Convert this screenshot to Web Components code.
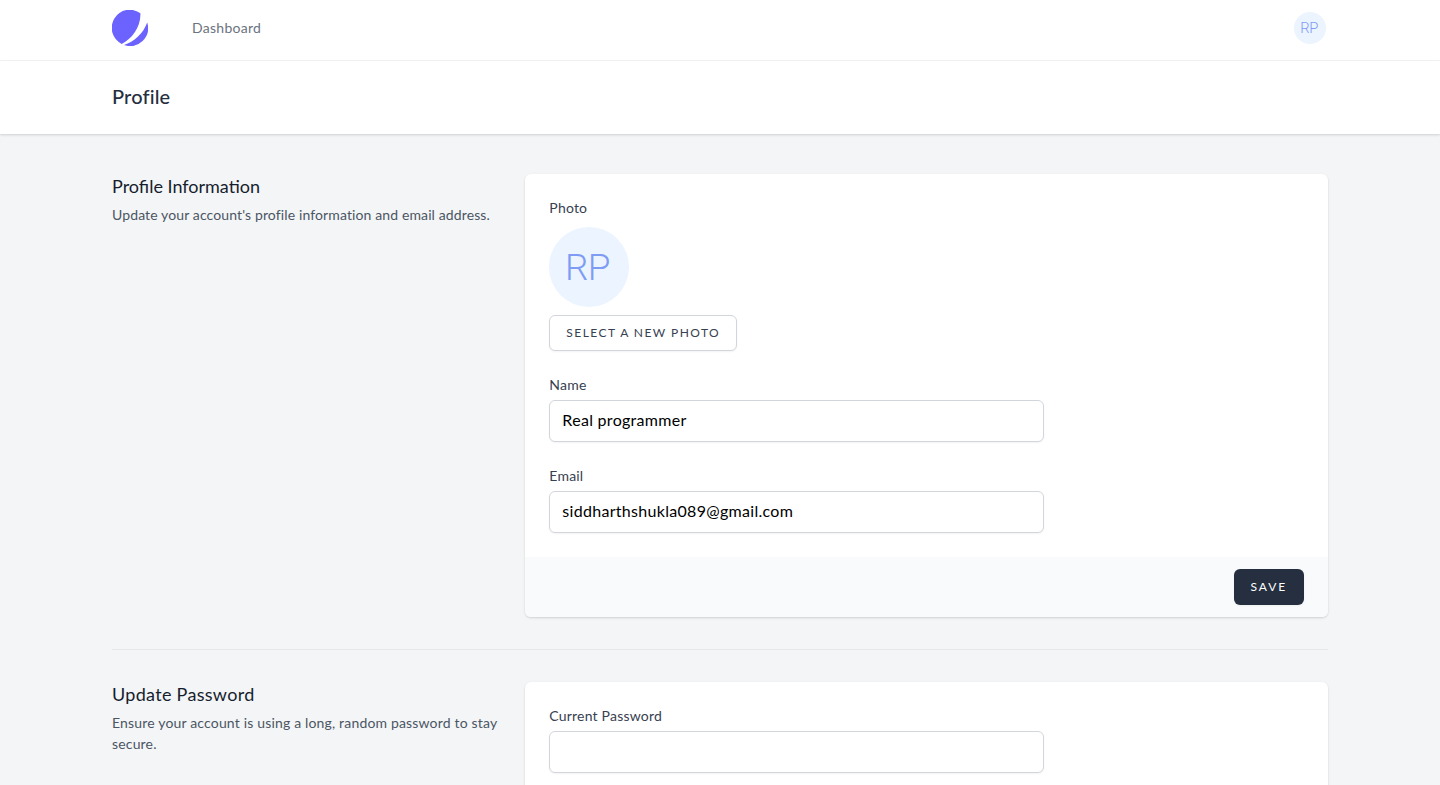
<!DOCTYPE html>
<html><head><meta charset="utf-8">
<style>
html,body{margin:0;padding:0;height:785px;overflow:hidden;background:#f4f5f7;font-family:Lato,"Open Sans",sans-serif;color:#1a202c}
</style></head><body>
<app-nav></app-nav>
<page-header>Profile</page-header>
<main-area>
 <form-section heading="Profile Information" desc="Update your account's profile information and email address." style="--hs:0px;--ds:.12px">
  <field-label>Photo</field-label>
  <user-avatar size="80" style="margin-top:9px"></user-avatar>
  <ui-button style="margin-top:8px;--bs:1.44px">SELECT A NEW PHOTO</ui-button>
  <text-field label="Name" value="Real programmer" style="margin-top:24px"></text-field>
  <text-field label="Email" value="siddharthshukla089@gmail.com" style="margin-top:24px"></text-field>
  <ui-button slot="actions" variant="dark">SAVE</ui-button>
 </form-section>
 <section-divider></section-divider>
 <form-section heading="Update Password" desc="Ensure your account is using a long, random password to stay secure." style="--hs:.3px;--ds:.17px">
  <text-field label="Current Password" value=""></text-field>
 </form-section>
</main-area>
<script>
function def(name,css,html){
 customElements.define(name,class extends HTMLElement{
  connectedCallback(){
   if(this.shadowRoot)return;
   const r=this.attachShadow({mode:'open'});
   const h=typeof html==='function'?html(this):html;
   r.innerHTML='<style>'+css+'</style>'+h;
  }
 });
}
def('user-avatar',`:host{display:block;width:32px;height:32px;border-radius:50%;background:#ebf4ff;color:#7f9cf5}
 div{width:100%;height:100%;display:flex;align-items:center;justify-content:center;font-family:Roboto,sans-serif;font-weight:300;line-height:1;box-sizing:border-box}`,
 el=>{const s=+(el.getAttribute('size')||32);el.style.width=el.style.height=s+'px';return `<div style="font-size:${s*0.46}px;letter-spacing:${s*-0.01}px;padding-right:${s*0.05}px;padding-top:${s*0.04}px">RP</div>`});
def('app-nav',`:host{display:block;background:#fff;border-bottom:1px solid #f4f5f7;height:60px}
 .in{max-width:1216px;margin:0 auto;height:60px;display:flex;align-items:center}
 svg{display:block;width:36px;height:36px;margin-top:-4px;flex:none}
 a{margin-left:44px;font-size:14px;color:#6b7280;letter-spacing:.27px;margin-top:-6px}
 user-avatar{margin-left:auto;margin-right:2px;margin-top:-4px}`,
 `<div class="in"><svg viewBox="0 0 36 36"><path fill="#6c63ff" d="M28.4 3.300A18 18 0 1 0 9.700 33.900C20 29 29 17 28.400 3.300z"/><path fill="#6c63ff" d="M35.200 12.600A18 18 0 0 1 12 35C22 32 31 24 35.200 12.600z"/></svg><a>Dashboard</a><user-avatar></user-avatar></div>`);
def('page-header',`:host{display:block;background:#fff;box-shadow:0 1px 3px 0 rgba(0,0,0,.1),0 1px 2px 0 rgba(0,0,0,.06);position:relative}
 h2{max-width:1216px;margin:0 auto;padding:23px 0 25px;font-size:20px;line-height:25px;font-weight:500;color:#252f3f;letter-spacing:.15px}`,
 `<h2><slot></slot></h2>`);
def('main-area',`:host{display:block;max-width:1216px;margin:0 auto;padding-top:40px}`,`<slot></slot>`);
def('section-divider',`:host{display:block;padding:32px 0}div{border-top:1px solid #e5e7eb}`,`<div></div>`);
def('form-section',`:host{display:grid;grid-template-columns:repeat(3,minmax(0,1fr));column-gap:24px}
 h3{margin:0;font-size:18px;line-height:24px;font-weight:400;color:#161e2e;letter-spacing:var(--hs,0)}
 p{margin:6px 0 0;font-size:14px;line-height:21px;color:#4b5563;letter-spacing:var(--ds,.12px)}
 .card{grid-column:span 2;background:#fff;border-radius:6px;box-shadow:0 1px 3px 0 rgba(0,0,0,.1),0 1px 2px 0 rgba(0,0,0,.06);overflow:hidden}
 .body{padding:24px;display:flex;flex-direction:column;align-items:flex-start}
 .foot{display:flex;justify-content:flex-end;padding:12px 24px;background:#f9fafb}
 .foot[hidden]{display:none}`,
 el=>`<div class="side"><h3>${el.getAttribute('heading')}</h3><p>${el.getAttribute('desc')}</p></div>
 <div class="card"><div class="body"><slot></slot></div><div class="foot" ${el.querySelector('[slot=actions]')?'':'hidden'}><slot name="actions"></slot></div></div>`);
def('field-label',`:host{display:block;font-size:14px;line-height:20px;color:#374151;letter-spacing:.2px}`,`<slot></slot>`);
def('ui-button',`:host{display:inline-block}
 button{display:block;height:36px;padding:0 16px 2px;border:1px solid #d2d6dc;border-radius:6px;background:#fff;color:#374151;font:400 12px Lato,sans-serif;letter-spacing:var(--bs,1.5px);box-shadow:0 1px 2px 0 rgba(0,0,0,.05);white-space:nowrap}
 :host([variant=dark]) button{background:#252f3f;color:#fff;border-color:transparent;letter-spacing:1.9px}`,`<button><slot></slot></button>`);
def('text-field',`:host{display:block;width:495px}
 input{display:block;box-sizing:border-box;width:100%;height:42px;margin-top:5px;padding:0 12px 3px;border:1px solid #d2d6dc;border-radius:6px;background:#fff;color:#000;font:16px Lato,sans-serif;letter-spacing:.3px;box-shadow:0 1px 2px 0 rgba(0,0,0,.05);outline:none}`,
 el=>`<field-label>${el.getAttribute('label')}</field-label><input value="${el.getAttribute('value')||''}">`);
</script>
</body></html>
